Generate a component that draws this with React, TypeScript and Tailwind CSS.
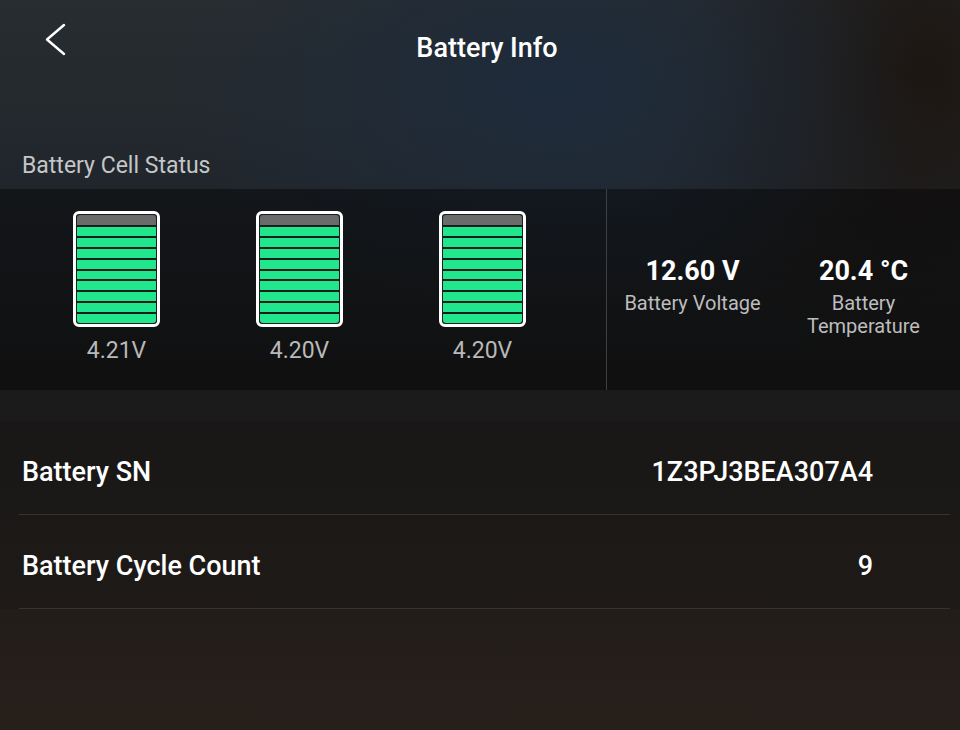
const cells = ['4.21V', '4.20V', '4.20V'];

function Cell({ voltage }: { voltage: string }) {
  return (
    <div className="flex flex-col items-center">
      <div className="w-[87px] h-[116px] rounded-[6px] border-[3px] border-white bg-[#1a1d1c] p-[1px] flex flex-col gap-[2px] overflow-hidden">
        <div className="h-[10px] bg-[#6a6b6b] rounded-t-[3px]" />
        {Array.from({ length: 9 }).map((_, i) => (
          <div key={i} className={`flex-1 bg-[#20e78c] ${i === 8 ? 'rounded-b-[3px]' : ''}`} />
        ))}
      </div>
      <div className="mt-[10px] text-[23px] leading-[27px] text-[#b9b9b9]">{voltage}</div>
    </div>
  );
}

function Stat({ value, label }: { value: string; label: string }) {
  return (
    <div className="flex flex-col items-center text-center">
      <div className="text-[27px] leading-[32px] font-bold text-white">{value}</div>
      <div className="mt-[5px] text-[20px] leading-[23px] text-[#bdbdbd] max-w-[150px]">{label}</div>
    </div>
  );
}

function Row({ label, value }: { label: string; value: string }) {
  return (
    <div className="h-[94px] pt-[9px] flex items-center justify-between border-b border-[#38332f] ml-[19px] mr-[10px]">
      <span className="ml-[3px] text-[27px] font-medium text-white">{label}</span>
      <span className="mr-[77px] text-[27px] font-medium text-white">{value}</span>
    </div>
  );
}

export default function App() {
  return (
    <div
      className="w-[960px] h-[730px] overflow-hidden text-white bg-[radial-gradient(ellipse_40%_30%_at_58%_12%,#1e2b3b_0%,transparent_100%),radial-gradient(ellipse_30%_40%_at_95%_10%,#1c1510_0%,transparent_100%),linear-gradient(180deg,#282d31_0%,#21262c_25%,#1b1a1a_55%,#271f1a_100%)]"
      style={{ fontFamily: 'Roboto, "Noto Sans", sans-serif' }}
    >
      {/* Header */}
      <div className="relative h-[95px] flex items-center justify-center">
        <button className="absolute left-[44px] top-[22px] text-white">
          <svg width="24" height="34" viewBox="0 0 24 34" fill="none" stroke="currentColor" strokeWidth={2.4} strokeLinecap="round" strokeLinejoin="round">
            <polyline points="20,3 3,17.5 20,32" />
          </svg>
        </button>
        <h1 className="text-[27px] leading-[32px] font-medium ml-[14px]">Battery Info</h1>
      </div>

      <div className="pt-[57px] pb-[9px] pl-[22px] text-[23px] leading-[28px] text-[#c4c6c8]">Battery Cell Status</div>

      {/* Cell panel */}
      <div className="h-[201px] flex bg-black/40">
        <div className="w-[607px] grid grid-cols-[183px_183px_183px] pl-[25px] pt-[22px] border-r border-[#3c4045]">
          {cells.map((v, i) => (
            <Cell key={i} voltage={v} />
          ))}
        </div>
        <div className="flex-1 grid grid-cols-[171px_171px] pt-[66px]">
          <Stat value="12.60 V" label="Battery Voltage" />
          <Stat value="20.4 °C" label="Battery Temperature" />
        </div>
      </div>

      {/* Info rows */}
      <div className="mt-[31px] bg-black/10">
        <Row label="Battery SN" value="1Z3PJ3BEA307A4" />
        <Row label="Battery Cycle Count" value="9" />
      </div>
    </div>
  );
}
